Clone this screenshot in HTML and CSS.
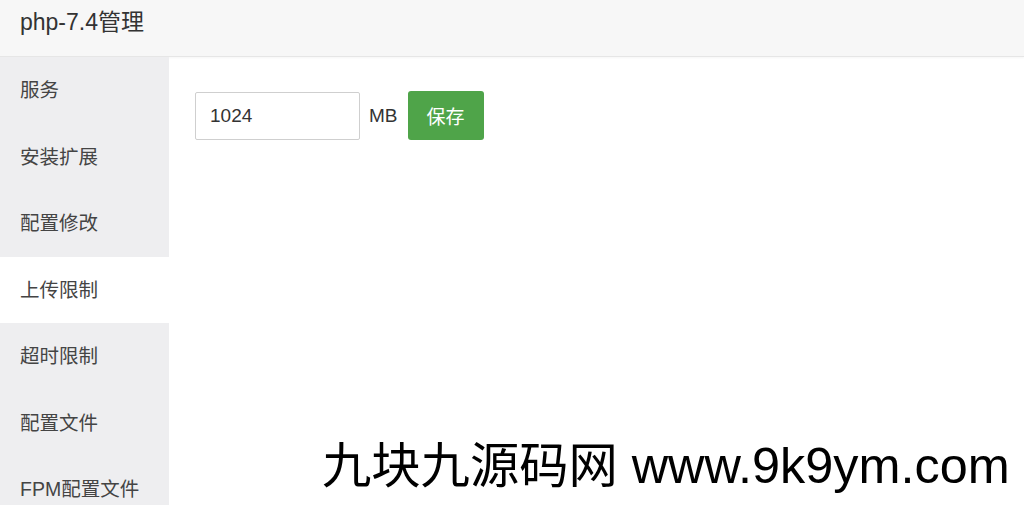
FILE: index.html
```html
<!DOCTYPE html>
<html lang="zh-CN">
<head>
<meta charset="utf-8">
<title>php-7.4管理</title>
<link rel="stylesheet" href="styles.css">
</head>
<body>
<div class="dialog">
  <header class="dialog-head">php-7.4管理</header>
  <div class="dialog-body">
    <nav class="side">
      <div class="side-item">服务</div>
      <div class="side-item">安装扩展</div>
      <div class="side-item">配置修改</div>
      <div class="side-item active">上传限制</div>
      <div class="side-item">超时限制</div>
      <div class="side-item">配置文件</div>
      <div class="side-item">FPM配置文件</div>
    </nav>
    <main class="content">
      <div class="form-row">
        <input class="num-input" type="text" value="1024">
        <span class="unit">MB</span>
        <button class="btn-save" type="button">保存</button>
      </div>
    </main>
  </div>
  <div class="watermark"><span class="wm-cn">九块九源码网</span> <span class="wm-en">www.9k9ym.com</span></div>
</div>
</body>
</html>
```

FILE: styles.css
```css
* { box-sizing: border-box; }
html, body {
  margin: 0;
  padding: 0;
  width: 1024px;
  height: 505px;
  overflow: hidden;
  background: #fff;
  font-family: "Liberation Sans", "Noto Sans CJK SC", sans-serif;
}
.dialog {
  position: relative;
  width: 1024px;
  height: 505px;
  display: flex;
  flex-direction: column;
}
.dialog-head {
  height: 57px;
  flex: none;
  background: #f7f7f7;
  border-bottom: 1px solid #e6e6e6;
  box-shadow: 0 1px 2px rgba(0,0,0,0.04);
  padding-left: 20px;
  font-size: 23px;
  line-height: 44px;
  color: #333;
}
.dialog-body {
  flex: 1;
  display: flex;
  min-height: 0;
}
.side {
  width: 169px;
  flex: none;
  background: #eeeef0;
  display: flex;
  flex-direction: column;
}
.side-item {
  height: 66.5px;
  flex: none;
  display: flex;
  align-items: center;
  padding: 0 0 3px 20px;
  font-size: 19.5px;
  color: #444;
  white-space: nowrap;
}
.side-item.active {
  background: #fff;
}
.content {
  flex: 1;
  padding: 34px 0 0 26px;
}
.form-row {
  display: flex;
  align-items: center;
}
.num-input {
  width: 165px;
  height: 48px;
  border: 1px solid #cfcfcf;
  border-radius: 2px;
  padding: 0 0 0 14px;
  font-family: "Liberation Sans", sans-serif;
  font-size: 19px;
  color: #333;
  background: #fff;
  outline: none;
}
.unit {
  margin-left: 9px;
  font-size: 19px;
  color: #333;
}
.btn-save {
  margin-left: 10px;
  width: 76px;
  height: 49px;
  border: none;
  border-radius: 3px;
  background: #4fa449;
  color: #fff;
  font-family: "Noto Sans CJK SC", sans-serif;
  font-size: 19px;
  padding: 0;
}
.watermark {
  position: absolute;
  left: 322px;
  top: 442px;
  font-family: "Liberation Sans", "Noto Sans CJK SC", sans-serif;
  font-size: 50px;
  line-height: 48px;
  color: #000;
  white-space: nowrap;
}
.wm-cn {
  font-size: 49.3px;
}
.wm-en {
  font-size: 50.4px;
}
```
